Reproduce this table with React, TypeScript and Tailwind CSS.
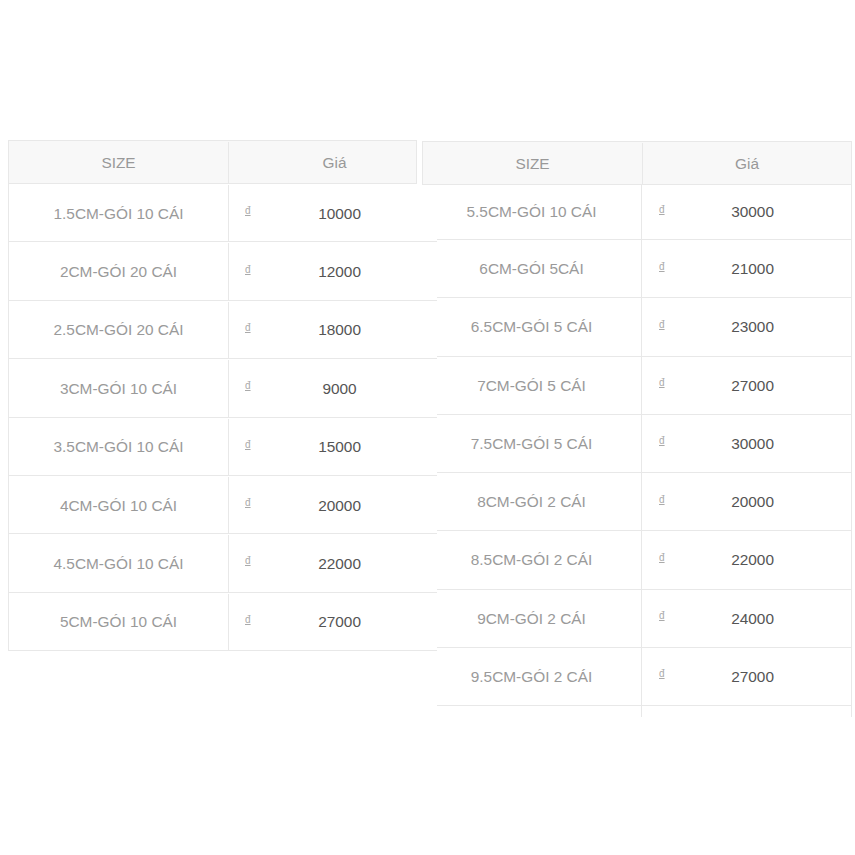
import React from "react";

const leftRows = [
  { size: "1.5CM-GÓI 10 CÁI", price: "10000" },
  { size: "2CM-GÓI 20 CÁI", price: "12000" },
  { size: "2.5CM-GÓI 20 CÁI", price: "18000" },
  { size: "3CM-GÓI 10 CÁI", price: "9000" },
  { size: "3.5CM-GÓI 10 CÁI", price: "15000" },
  { size: "4CM-GÓI 10 CÁI", price: "20000" },
  { size: "4.5CM-GÓI 10 CÁI", price: "22000" },
  { size: "5CM-GÓI 10 CÁI", price: "27000" },
];

const rightRows = [
  { size: "5.5CM-GÓI 10 CÁI", price: "30000" },
  { size: "6CM-GÓI 5CÁI", price: "21000" },
  { size: "6.5CM-GÓI 5 CÁI", price: "23000" },
  { size: "7CM-GÓI 5 CÁI", price: "27000" },
  { size: "7.5CM-GÓI 5 CÁI", price: "30000" },
  { size: "8CM-GÓI 2 CÁI", price: "20000" },
  { size: "8.5CM-GÓI 2 CÁI", price: "22000" },
  { size: "9CM-GÓI 2 CÁI", price: "24000" },
  { size: "9.5CM-GÓI 2 CÁI", price: "27000" },
];

function Dong() {
  return <span className="mb-[4px] text-[10px] leading-none text-[#aaaaaa] underline">đ</span>;
}

function LeftTable() {
  return (
    <div className="ml-[8px] w-[429px]">
      {/* header */}
      <div className="flex h-[44px] w-[409px] border border-[#e8e8e8] bg-[#f8f8f8] pt-[1px] text-[15.4px] text-[#999999]">
        <div className="flex w-[220px] items-center justify-center border-r border-[#e8e8e8]">SIZE</div>
        <div className="flex flex-1 items-center justify-center pl-[24px]">Giá</div>
      </div>
      {leftRows.map((r) => (
        <div key={r.size} className="flex h-[58.375px] border-b border-l border-[#e8e8e8] pt-[1px]">
          <div className="flex w-[220px] items-center justify-center border-r border-[#e8e8e8] text-[15.4px] text-[#9a9a9a]">
            {r.size}
          </div>
          <div className="flex flex-1 items-center pl-[16px]">
            <Dong />
            <span className="w-[178px] text-center text-[15.4px] text-[#555555]">{r.price}</span>
          </div>
        </div>
      ))}
    </div>
  );
}

function RightTable() {
  return (
    <div className="mt-[1px] w-[415px]">
      {/* header */}
      <div className="ml-[-15px] flex h-[44px] w-[430px] border border-[#e8e8e8] bg-[#f8f8f8] pt-[1px] text-[15.4px] text-[#999999]">
        <div className="flex w-[220px] items-center justify-center border-r border-[#e8e8e8]">SIZE</div>
        <div className="flex flex-1 items-center justify-center">Giá</div>
      </div>
      {rightRows.map((r, i) => (
        <div
          key={r.size}
          className={`flex border-b border-[#e8e8e8] ${i === 0 ? "h-[55px]" : "h-[58.25px]"}`}
        >
          <div className="flex w-[205px] items-center justify-center border-r border-[#e8e8e8] pr-[15px] text-[15.4px] text-[#9a9a9a]">
            {r.size}
          </div>
          <div className="flex flex-1 items-center border-r border-[#e8e8e8] pl-[17px]">
            <Dong />
            <span className="w-[176px] text-center text-[15.4px] text-[#555555]">{r.price}</span>
          </div>
        </div>
      ))}
      <div className="flex h-[11px]">
        <div className="w-[205px] border-r border-[#e8e8e8]" />
        <div className="flex-1 border-r border-[#e8e8e8]" />
      </div>
    </div>
  );
}

export default function App() {
  return (
    <div
      className="h-[855px] w-[855px] overflow-hidden bg-white pt-[140px]"
      style={{ fontFamily: '"Liberation Sans", Arial, sans-serif' }}
    >
      <div className="flex items-start">
        <LeftTable />
        <RightTable />
      </div>
    </div>
  );
}
